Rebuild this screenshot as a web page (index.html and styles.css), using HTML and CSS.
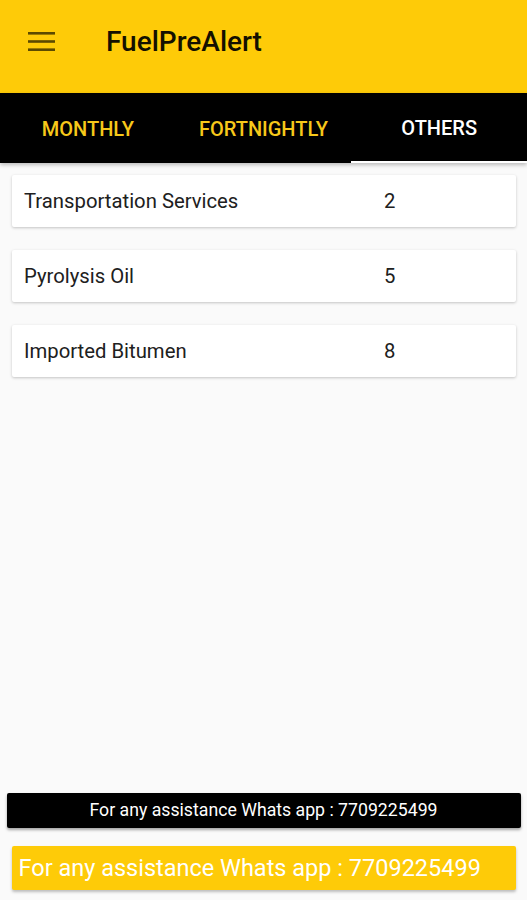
FILE: index.html
```html
<!DOCTYPE html>
<html lang="en">
  <head>
    <meta charset="UTF-8" />
    <title>FuelPreAlert</title>
    <link rel="stylesheet" href="styles.css">
  </head>
  <body>
    <!-- 상단 툴바 -->
    <header class="toolbar">
      <svg class="menu_icon" width="28" height="20" viewBox="0 0 28 20">
        <rect x="0" y="1" width="27" height="2.6" />
        <rect x="0" y="9.2" width="27" height="2.6" />
        <rect x="0" y="17.4" width="27" height="2.6" />
      </svg>
      <h1 class="title">FuelPreAlert</h1>
    </header>

    <!-- 탭 -->
    <nav class="tabs">
      <a class="tab">MONTHLY</a>
      <a class="tab">FORTNIGHTLY</a>
      <a class="tab active">OTHERS</a>
    </nav>

    <main class="content">
      <ul class="list">
        <li class="card"><span class="name">Transportation Services</span><span class="count">2</span></li>
        <li class="card"><span class="name">Pyrolysis Oil</span><span class="count">5</span></li>
        <li class="card"><span class="name">Imported Bitumen</span><span class="count">8</span></li>
      </ul>
    </main>

    <footer class="footer">
      <p class="help_dark">For any assistance Whats app : 7709225499</p>
      <p class="help_yellow">For any assistance Whats app : 7709225499</p>
    </footer>
  </body>
</html>
```

FILE: styles.css
```css
* {
  box-sizing: border-box;
  margin: 0;
  padding: 0;
  list-style: none;
}
html,
body {
  height: 100%;
}
body {
  display: flex;
  flex-direction: column;
  background-color: #fafafa;
  font-family: Roboto, "Liberation Sans", sans-serif;
  color: #1e1e1e;
}
.toolbar {
  display: flex;
  align-items: center;
  height: 93px;
  padding: 0 0 11px 28px;
  background-color: #fecb08;
}
.menu_icon {
  fill: #5c4a00;
}
.title {
  margin-left: 50px;
  font-size: 28px;
  font-weight: 500;
  color: #141000;
}
.tabs {
  display: flex;
  height: 70px;
  background-color: #000;
  box-shadow: 0 2px 4px rgba(0, 0, 0, 0.25);
  position: relative;
}
.tab {
  flex: 1;
  display: flex;
  align-items: center;
  justify-content: center;
  padding-top: 2px;
  font-size: 20px;
  font-weight: 500;
  color: #f7c81a;
}
.tab.active {
  color: #fff;
  border-bottom: 2px solid #fff;
}
.content {
  flex: 1;
  padding: 12px 11px 0 12px;
}
.list {
  display: flex;
  flex-direction: column;
  gap: 23px;
}
.card {
  display: flex;
  align-items: center;
  height: 52px;
  padding-left: 12px;
  background-color: #fff;
  border-radius: 2px;
  box-shadow: 0 1px 3px rgba(0, 0, 0, 0.22);
  font-size: 20.3px;
  color: #202020;
}
.name {
  width: 360px;
}
.footer {
  display: flex;
  flex-direction: column;
  align-items: center;
  padding-bottom: 10px;
}
.help_dark {
  width: 514px;
  height: 35px;
  line-height: 35px;
  text-align: center;
  background-color: #000;
  color: #fff;
  font-size: 17.7px;
  border-radius: 2px;
  box-shadow: 0 2px 3px rgba(0, 0, 0, 0.35);
}
.help_yellow {
  width: 504px;
  height: 44px;
  line-height: 44px;
  margin-top: 18px;
  padding-left: 7px;
  background-color: #fecb08;
  color: #fff;
  font-size: 23.5px;
  border-radius: 2px;
  box-shadow: 0 2px 3px rgba(0, 0, 0, 0.25);
}
```
